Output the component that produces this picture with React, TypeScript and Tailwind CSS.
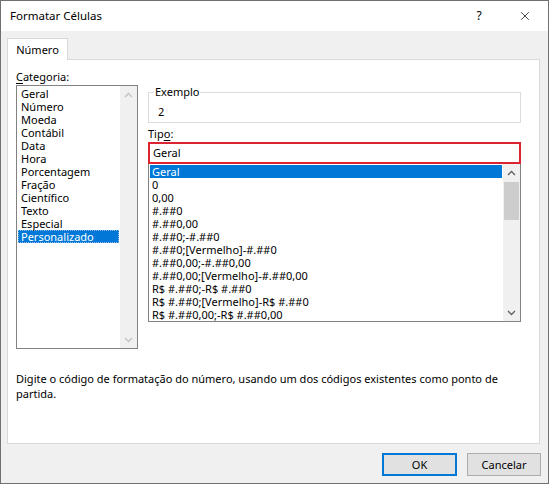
import { X } from "lucide-react";

const categorias = [
  "Geral",
  "Número",
  "Moeda",
  "Contábil",
  "Data",
  "Hora",
  "Porcentagem",
  "Fração",
  "Científico",
  "Texto",
  "Especial",
  "Personalizado",
];

const tipos = [
  "Geral",
  "0",
  "0,00",
  "#.##0",
  "#.##0,00",
  "#.##0;-#.##0",
  "#.##0;[Vermelho]-#.##0",
  "#.##0,00;-#.##0,00",
  "#.##0,00;[Vermelho]-#.##0,00",
  "R$ #.##0;-R$ #.##0",
  "R$ #.##0;[Vermelho]-R$ #.##0",
  "R$ #.##0,00;-R$ #.##0,00",
];

function Chevron({ down, color }: { down?: boolean; color: string }) {
  return (
    <svg width="9" height="6" viewBox="0 0 9 6" fill="none">
      <path
        d={down ? "M1 1 L4.5 4.5 L8 1" : "M1 5 L4.5 1.5 L8 5"}
        stroke={color}
        strokeWidth="1.3"
      />
    </svg>
  );
}

function ScrollBar({ disabled }: { disabled?: boolean }) {
  const color = disabled ? "#c2c2c2" : "#606060";
  return (
    <div className="w-[17px] bg-[#f0f0f0] flex flex-col">
      <div className="h-[17px] flex items-center justify-center">
        <Chevron color={color} />
      </div>
      {!disabled && <div className="h-[38px] mt-[1px] mx-[1px] bg-[#cdcdcd]" />}
      <div className="flex-1" />
      <div className="h-[17px] flex items-center justify-center">
        <Chevron down color={color} />
      </div>
    </div>
  );
}

export default function App() {
  return (
    <div className="w-[549px] h-[484px] flex flex-col border border-[#707070] bg-[#f0f0f0] text-[11px] text-black font-['Noto_Sans',sans-serif]">
      {/* barra de título */}
      <div className="h-[30px] shrink-0 bg-white flex items-center pl-[9px]">
        <span className="text-[11.5px] leading-[16px]">Formatar Células</span>
        <div className="ml-auto flex h-full">
          <div className="w-[46px] flex items-center justify-center text-[12px]">?</div>
          <div className="w-[46px] flex items-center justify-center">
            <X className="w-[14px] h-[14px]" strokeWidth={1.2} />
          </div>
        </div>
      </div>

      <div className="flex-1 flex flex-col pl-[6px] pr-[8px] pt-[7px]">
        <div className="self-start w-[61px] h-[22px] -mb-px relative z-10 bg-white border border-b-0 border-[#d9d9d9] flex items-center justify-center leading-[16px]">
          Número
        </div>

        <div className="h-[385px] shrink-0 bg-white border border-[#d9d9d9] pl-[8px] pt-[8px] flex flex-col">
          <div className="flex gap-[10px]">
            {/* Categoria */}
            <div className="w-[122px] flex flex-col">
              <div className="h-[17px] leading-[17px]">
                <span className="underline underline-offset-2">C</span>ategoria:
              </div>
              <div className="h-[264px] border border-[#828282] flex">
                <div className="flex-1 p-[1px]">
                  {categorias.map((c) => (
                    <div
                      key={c}
                      className={`h-[13px] leading-[13px] pl-[3px] whitespace-nowrap ${
                        c === "Personalizado"
                          ? "bg-[#0078d7] text-white outline outline-1 outline-dotted outline-[#8fb8e6] -outline-offset-1"
                          : ""
                      }`}
                    >
                      {c}
                    </div>
                  ))}
                </div>
                <ScrollBar disabled />
              </div>
            </div>

            {/* coluna direita */}
            <div className="w-[373px] flex flex-col">
              <fieldset className="mt-[17px] border border-[#dcdcdc] pt-[6px] pb-[4px]">
                <legend className="ml-[5px] px-[1px] leading-[14px]">Exemplo</legend>
                <div className="pl-[9px] leading-[13px]">2</div>
              </fieldset>

              <div className="mt-[3px] h-[16px] leading-[16px]">
                Tip<span className="underline underline-offset-2">o</span>:
              </div>
              <div className="h-[22px] border-2 border-[#dc2330] px-[3px] flex items-center leading-[16px]">
                Geral
              </div>
              <div className="h-[158px] border border-t-0 border-[#828282] flex">
                <div className="flex-1 px-[1px] pt-[1px] overflow-hidden">
                  {tipos.map((t, i) => (
                    <div
                      key={t}
                      className={`h-[13px] leading-[13px] pl-[2px] whitespace-nowrap ${
                        i === 0 ? "bg-[#0078d7] text-white" : ""
                      }`}
                    >
                      {t}
                    </div>
                  ))}
                </div>
                <ScrollBar />
              </div>
            </div>
          </div>

          <p className="mt-[22px] leading-[15px]">
            Digite o código de formatação do número, usando um dos códigos existentes como ponto de
            <br />
            partida.
          </p>
        </div>

        <div className="mt-[9px] flex justify-end gap-[10px] -mr-px">
          <button className="w-[75px] h-[23px] border-2 border-[#0078d7] bg-[#e1e1e1] leading-[16px]">
            OK
          </button>
          <button className="w-[74px] h-[23px] border border-[#adadad] bg-[#e1e1e1] leading-[16px]">
            Cancelar
          </button>
        </div>
      </div>
    </div>
  );
}
